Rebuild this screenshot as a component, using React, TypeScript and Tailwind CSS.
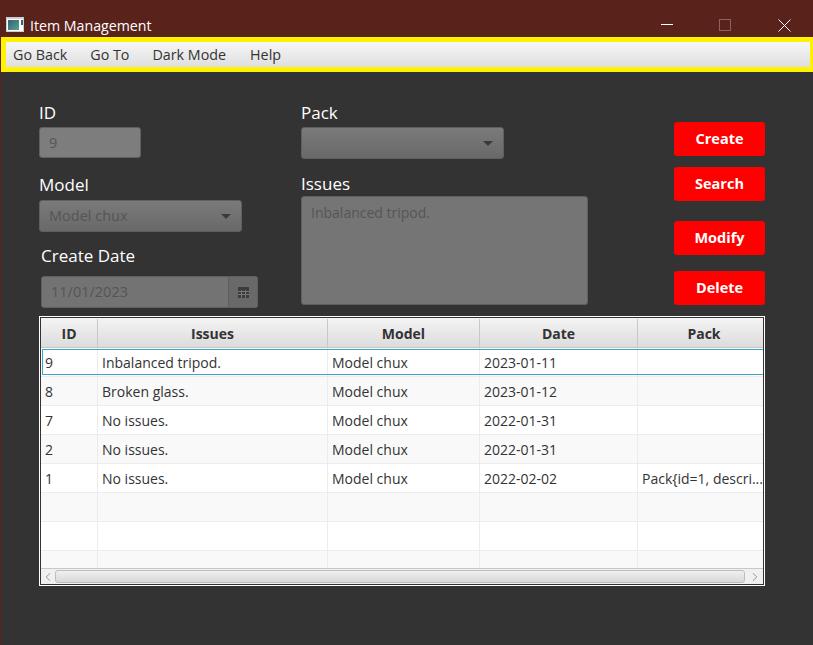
import React from 'react';
import { ChevronLeft, ChevronRight } from 'lucide-react';

const rows = [
  { id: '9', issues: 'Inbalanced tripod.', model: 'Model chux', date: '2023-01-11', pack: '' },
  { id: '8', issues: 'Broken glass.', model: 'Model chux', date: '2023-01-12', pack: '' },
  { id: '7', issues: 'No issues.', model: 'Model chux', date: '2022-01-31', pack: '' },
  { id: '2', issues: 'No issues.', model: 'Model chux', date: '2022-01-31', pack: '' },
  { id: '1', issues: 'No issues.', model: 'Model chux', date: '2022-02-02', pack: 'Pack{id=1, descri...' },
  { id: '', issues: '', model: '', date: '', pack: '' },
  { id: '', issues: '', model: '', date: '', pack: '' },
  { id: '', issues: '', model: '', date: '', pack: '' },
];

const Caret = () => (
  <div className="h-0 w-0 border-l-[5px] border-r-[5px] border-t-[5px] border-l-transparent border-r-transparent border-t-[#3a3a3a]" />
);

const Select = ({ value, className }: { value?: string; className: string }) => (
  <div className={`flex items-center justify-between rounded-[3px] border border-[#5f5f5f] bg-gradient-to-b from-[#7a7a7a] to-[#696969] pl-[9px] pr-[10px] text-[14.5px] text-[#555555] ${className}`}>
    <span>{value}</span>
    <Caret />
  </div>
);

const ActionButton = ({ label, className = '' }: { label: string; className?: string }) => (
  <button className={`h-[34px] w-[91px] rounded-[3px] bg-[#ff0000] text-[14.5px] font-bold text-white ${className}`}>{label}</button>
);

const Label = ({ children, className = '' }: { children: React.ReactNode; className?: string }) => (
  <div className={`text-[17px] leading-[24px] text-white ${className}`}>{children}</div>
);

const cols = 'grid grid-cols-[57px_230px_152px_158px_133px]';

export default function App() {
  return (
    <div className="flex h-[645px] w-[813px] flex-col overflow-hidden bg-[#59231c] pl-px font-['Open_Sans','Noto_Sans',sans-serif]">
      {/* Title bar */}
      <div className="flex h-[37px] shrink-0 items-end pb-px">
        <div className="mb-[4px] ml-[5px] flex h-[15px] w-[18px] items-center border border-t-2 border-[#cfcfcf] bg-white pl-px">
          <div className="h-[10px] w-[11px] bg-gradient-to-br from-[#33607a] to-[#5aa58a]" />
          <div className="ml-[2px] mt-px h-[5px] w-[2px] self-start bg-[#33607a]" />
        </div>
        <span className="ml-[6px] text-[14.2px] leading-[20px] text-white">Item Management</span>
        <div className="ml-auto flex self-start pt-[19px]">
          <svg width="12" height="12" viewBox="0 0 12 12" className="mr-[46px]">
            <path d="M0 5.5h12" stroke="#ffffff" />
          </svg>
          <svg width="12" height="12" viewBox="0 0 12 12" className="mr-[47px]">
            <rect x="0.5" y="0.5" width="11" height="11" fill="none" stroke="#8a635e" />
          </svg>
          <svg width="13" height="13" viewBox="0 0 13 13" className="mr-[22px]">
            <path d="M0.5 0.5l12 12M12.5 0.5l-12 12" stroke="#ffffff" />
          </svg>
        </div>
      </div>

      {/* Menu */}
      <div className="flex h-[35px] shrink-0 items-center border-[5px] border-r-[3px] border-[#fff200] bg-gradient-to-b from-[#f6f6f6] to-[#dfdfdf] pl-[7px] text-[14.3px] text-[#333333]">
        <span>Go Back</span>
        <span className="ml-[23px]">Go To</span>
        <span className="ml-[23px]">Dark Mode</span>
        <span className="ml-[24px]">Help</span>
      </div>

      {/* Content */}
      <div className="flex-1 bg-[#333333] pl-[38px] pt-[29px]">
        <div className="flex h-[215px]">
          <div className="w-[262px]">
            <Label>ID</Label>
            <div className="mt-[2px] flex h-[31px] w-[102px] items-center rounded-[3px] border border-[#5f5f5f] bg-[#7d7d7d] pl-[9px] text-[14.5px] text-[#555555]">9</div>
            <Label className="mt-[15px]">Model</Label>
            <Select value="Model chux" className="mt-[3px] h-[32px] w-[203px]" />
            <Label className="ml-[2px] mt-[12px]">Create Date</Label>
            <div className="ml-[2px] mt-[8px] flex h-[32px] w-[217px] rounded-[3px] border border-[#5f5f5f] bg-[#737373] text-[14.5px] text-[#555555]">
              <div className="flex flex-1 items-center pl-[9px]">11/01/2023</div>
              <div className="flex w-[29px] items-center justify-center border-l border-[#5f5f5f] bg-[#696969]">
                <svg width="11" height="11" viewBox="0 0 11 11">
                  <rect width="11" height="11" fill="#3c3c3c" />
                  <path d="M0 4.5h11M0 7.5h11M3.5 3v8M7.5 3v8" stroke="#777" strokeWidth="1" />
                </svg>
              </div>
            </div>
          </div>

          <div className="w-[373px]">
            <Label>Pack</Label>
            <Select className="mt-[2px] h-[32px] w-[203px]" />
            <Label className="mt-[13px]">Issues</Label>
            <div className="h-[109px] w-[287px] rounded-[3px] border border-[#5f5f5f] bg-[#757575] px-[9px] pt-[5px] text-[14px] text-[#555555]">Inbalanced tripod.</div>
          </div>

          <div className="flex flex-col pt-[21px]">
            <ActionButton label="Create" />
            <ActionButton label="Search" className="mt-[11px]" />
            <ActionButton label="Modify" className="mt-[20px]" />
            <ActionButton label="Delete" className="mt-[16px]" />
          </div>
        </div>

        {/* Table */}
        <div className="h-[270px] w-[726px] overflow-hidden border border-white">
          <div className="flex h-full flex-col overflow-hidden border border-[#333333] bg-white text-[14px] text-[#333333]">
            <div className={`${cols} h-[30px] shrink-0 border-b border-[#c8c8c8] bg-gradient-to-b from-[#f4f4f4] to-[#dcdcdc] pt-px font-bold`}>
              {['ID', 'Issues', 'Model', 'Date', 'Pack'].map((h) => (
                <div key={h} className="flex items-center justify-center border-r border-[#c8c8c8]">{h}</div>
              ))}
            </div>
            <div className="h-[220px] overflow-hidden">
              {rows.map((r, i) => (
                <div
                  key={i}
                  className={`${cols} relative h-[29px] border-b border-[#ececec] ${i % 2 === 0 ? 'bg-white' : 'bg-[#f9f9f9]'}`}
                >
                  {i === 0 && <div className="absolute bottom-px left-px top-px -right-[20px] border border-[#39a6cc]" />}
                  {[r.id, r.issues, r.model, r.date, r.pack].map((c, j) => (
                    <div key={j} className="flex items-center overflow-hidden whitespace-nowrap border-r border-[#ececec] pl-[4px]">{c}</div>
                  ))}
                </div>
              ))}
            </div>
            <div className="flex h-[16px] shrink-0 items-center border-t border-[#c8c8c8] bg-[#f0f0f0]">
              <ChevronLeft size={14} strokeWidth={1.5} className="text-[#888888]" />
              <div className="h-[13px] flex-1 rounded-[3px] border border-[#bdbdbd] bg-gradient-to-b from-[#f0f0f0] to-[#d8d8d8]" />
              <ChevronRight size={14} strokeWidth={1.5} className="ml-[3px] mr-px text-[#888888]" />
            </div>
          </div>
        </div>
      </div>
    </div>
  );
}
